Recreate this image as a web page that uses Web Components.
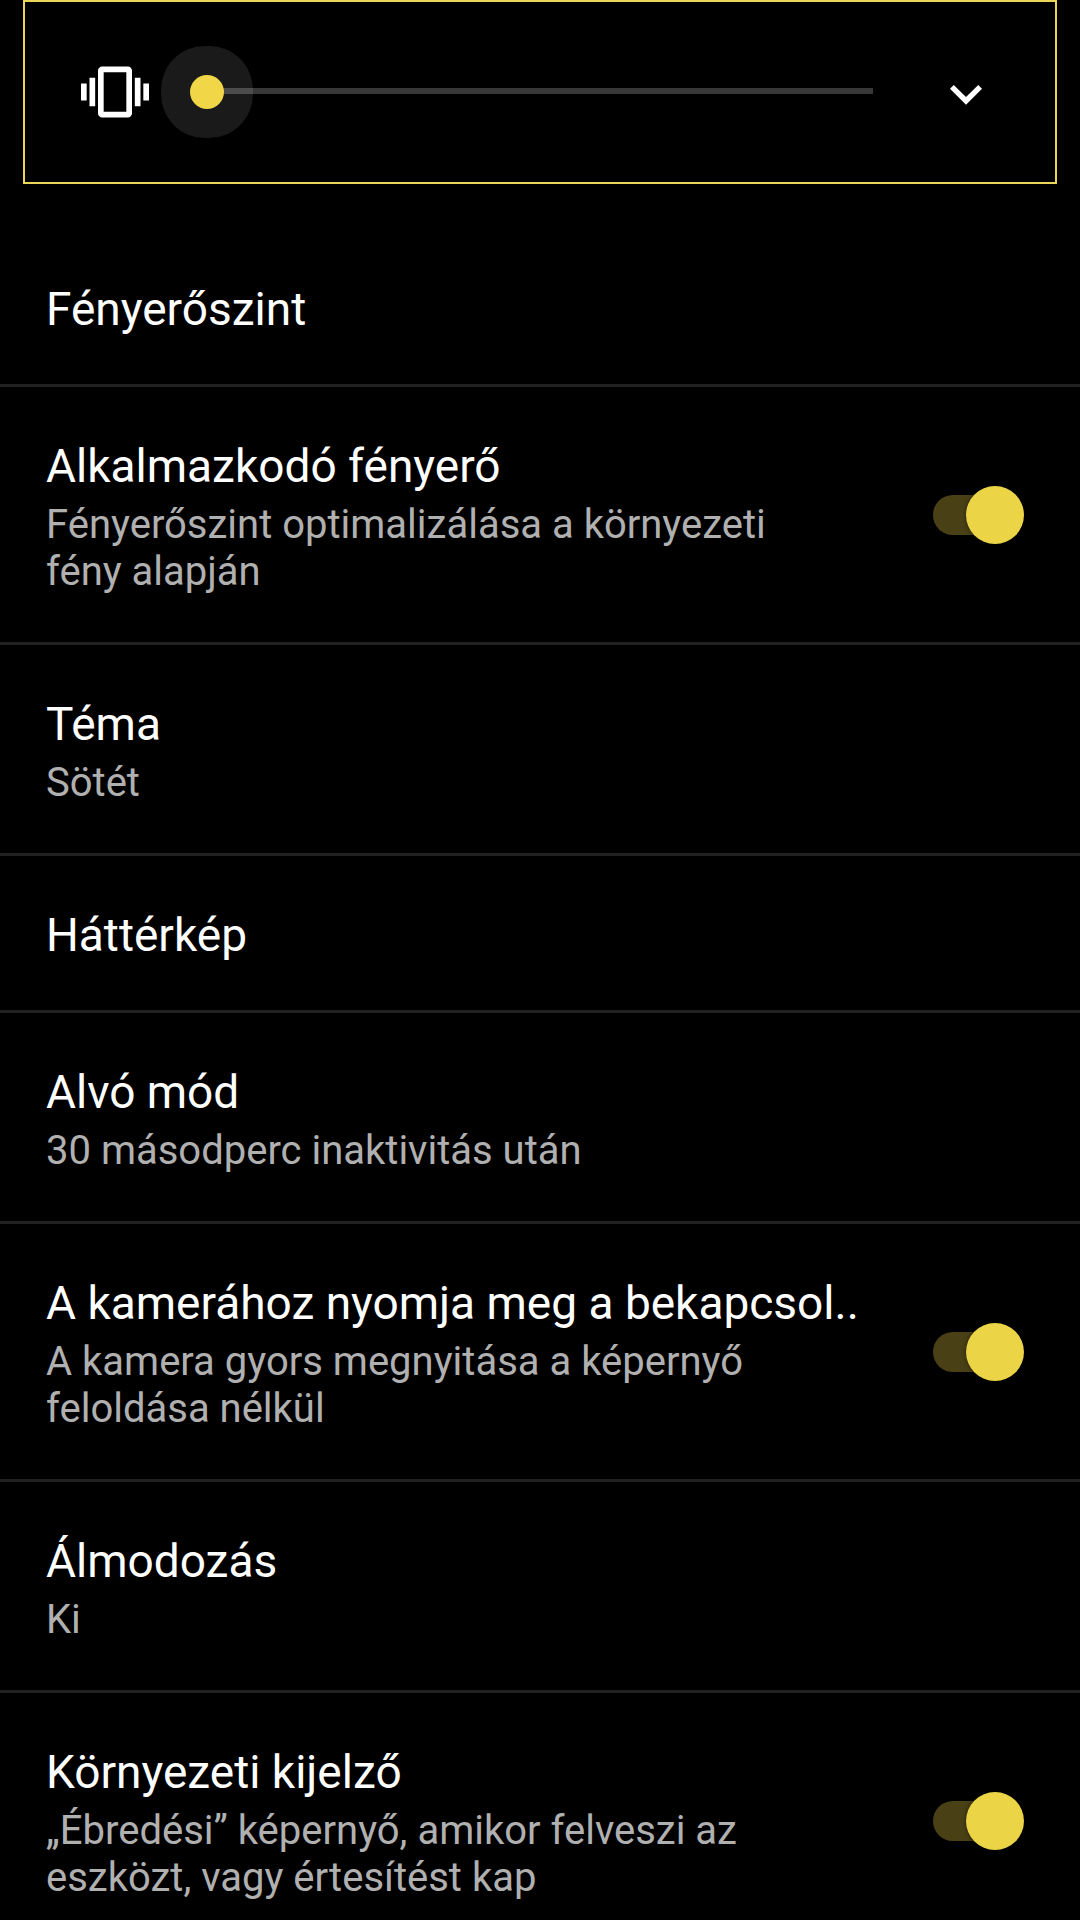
<!DOCTYPE html>
<html lang="hu">
<head>
  <meta charset="UTF-8">
  <meta name="viewport" content="width=device-width, initial-scale=1">
  <title>Kijelző</title>
  <style>
    body {
      margin: 0;
      background: #000;
      color: #fff;
      font-family: Roboto, "Noto Sans", sans-serif;
    }
  </style>
</head>
<body>
  <settings-screen>
    <volume-panel slot="overlay"></volume-panel>
    <setting-row>Fényerőszint</setting-row>
    <setting-row type="switch" checked>
      Alkalmazkodó fényerő
      <span slot="summary">Fényerőszint optimalizálása a környezeti fény alapján</span>
    </setting-row>
    <setting-row>
      Téma
      <span slot="summary">Sötét</span>
    </setting-row>
    <setting-row>Háttérkép</setting-row>
    <setting-row>
      Alvó mód
      <span slot="summary">30 másodperc inaktivitás után</span>
    </setting-row>
    <setting-row type="switch" checked>
      A kamerához nyomja meg a bekapcsol..
      <span slot="summary">A kamera gyors megnyitása a képernyő feloldása nélkül</span>
    </setting-row>
    <setting-row>
      Álmodozás
      <span slot="summary">Ki</span>
    </setting-row>
    <setting-row type="switch" checked>
      Környezeti kijelző
      <span slot="summary">„Ébredési” képernyő, amikor felveszi az eszközt, vagy értesítést kap</span>
    </setting-row>
  </settings-screen>

  <script>
    class SettingsScreen extends HTMLElement {
      constructor() {
        super();
        this.attachShadow({ mode: 'open' });
      }

      connectedCallback() {
        this.shadowRoot.innerHTML = `
          <style>
            :host {
              display: flex;
              flex-direction: column;
              height: 100vh;
              overflow: hidden;
            }
            main {
              flex: 1;
              min-height: 0;
              margin-top: 46px;
              overflow-y: auto;
              scrollbar-width: none;
            }
          </style>
          <slot name="overlay"></slot>
          <main><slot></slot></main>
        `;
      }
    }

    class VolumePanel extends HTMLElement {
      constructor() {
        super();
        this.attachShadow({ mode: 'open' });
      }

      connectedCallback() {
        this.shadowRoot.innerHTML = `
          <style>
            :host {
              --accent: #f1d747;
              display: flex;
              align-items: center;
              box-sizing: border-box;
              height: 184px;
              margin: 0 23px;
              padding: 0 57px 0 56px;
              border: 2px solid #ebd657;
              background: #000;
            }
            button {
              display: block;
              padding: 0;
              border: none;
              background: none;
              color: inherit;
              cursor: pointer;
            }
            svg {
              display: block;
              fill: currentColor;
            }
            .ringer {
              margin-right: 41px;
            }
            .expand {
              margin-left: 61px;
            }
            input {
              flex: 1;
              min-width: 0;
              height: 34px;
              margin: 0;
              appearance: none;
              -webkit-appearance: none;
              background: linear-gradient(#383838, #383838) 17px 13px / 100% 6px no-repeat;
              cursor: pointer;
            }
            input::-webkit-slider-runnable-track {
              height: 34px;
            }
            input::-webkit-slider-thumb {
              -webkit-appearance: none;
              width: 34px;
              height: 34px;
              border-radius: 50%;
              background: var(--accent);
              box-shadow: 0 0 0 29px rgba(255, 255, 255, 0.1);
            }
            input:focus-visible,
            button:focus-visible {
              outline: 2px solid var(--accent);
            }
          </style>
          <button class="ringer" type="button" aria-label="Rezgés">
            <svg width="68" height="68" viewBox="0 0 24 24" aria-hidden="true">
              <path d="M0 15h2V9H0v6zm3 2h2V7H3v10zm19-8v6h2V9h-2zm-3 8h2V7h-2v10zM16.5 3h-9C6.67 3 6 3.67 6 4.5v15c0 .83.67 1.5 1.5 1.5h9c.83 0 1.5-.67 1.5-1.5v-15c0-.83-.67-1.5-1.5-1.5zM16 19H8V5h8v14z"/>
            </svg>
          </button>
          <input type="range" min="0" max="7" value="0" aria-label="Hangerő">
          <button class="expand" type="button" aria-label="Továbbiak">
            <svg width="64" height="64" viewBox="0 0 24 24" aria-hidden="true">
              <path d="M16.59 9.34L12 13.92 7.41 9.34 6 10.75l6 6 6-6z"/>
            </svg>
          </button>
        `;
      }
    }

    class SettingRow extends HTMLElement {
      constructor() {
        super();
        this.attachShadow({ mode: 'open' });
      }

      connectedCallback() {
        this.isSwitch = this.getAttribute('type') === 'switch';
        this.hasSummary = this.querySelector('[slot="summary"]') !== null;
        this.render();
      }

      render() {
        const tag = this.isSwitch ? 'label' : 'button';
        const checked = this.hasAttribute('checked') ? 'checked' : '';
        this.shadowRoot.innerHTML = `
          <style>
            :host {
              display: block;
              border-bottom: 3px solid #212121;
            }
            .row {
              display: flex;
              align-items: center;
              gap: 84px;
              box-sizing: border-box;
              width: 100%;
              padding: 47px 56px 47px 46px;
              border: none;
              background: none;
              color: inherit;
              font: inherit;
              text-align: left;
              cursor: pointer;
            }
            .text {
              display: flex;
              flex: 1;
              flex-direction: column;
              gap: 7px;
              min-width: 0;
              padding-top: 4px;
            }
            .title {
              font-size: 46px;
              line-height: 56px;
              white-space: nowrap;
            }
            .summary {
              color: #b0b0b0;
              font-size: 40px;
              line-height: 47px;
            }
            input {
              display: grid;
              flex: none;
              align-items: center;
              width: 91px;
              height: 58px;
              margin: 0;
              appearance: none;
              -webkit-appearance: none;
              cursor: pointer;
            }
            input::before,
            input::after {
              content: "";
              grid-area: 1 / 1;
            }
            input::before {
              width: 82px;
              height: 40px;
              border-radius: 20px;
              background: #3a3a3a;
            }
            input::after {
              width: 58px;
              height: 58px;
              border-radius: 50%;
              background: #b0b0b0;
              box-shadow: 0 0 4px rgba(0, 0, 0, 0.5);
            }
            input:checked::before {
              background: #4a4016;
            }
            input:checked::after {
              justify-self: end;
              background: #ebd446;
            }
            .row:focus-visible,
            input:focus-visible {
              outline: 2px solid #ebd446;
            }
          </style>
          <${tag} class="row">
            <span class="text">
              <span class="title"><slot></slot></span>
              ${this.hasSummary ? '<span class="summary"><slot name="summary"></slot></span>' : ''}
            </span>
            ${this.isSwitch ? `<input type="checkbox" role="switch" ${checked}>` : ''}
          </${tag}>
        `;
      }
    }

    customElements.define('settings-screen', SettingsScreen);
    customElements.define('volume-panel', VolumePanel);
    customElements.define('setting-row', SettingRow);
  </script>
</body>
</html>
